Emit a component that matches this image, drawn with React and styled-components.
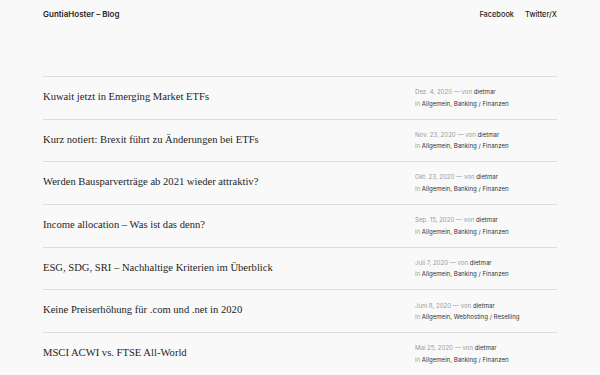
import React from "react";
import styled, { createGlobalStyle } from "styled-components";

const GlobalStyle = createGlobalStyle`
    html, body {
        margin: 0;
        padding: 0;
        background: #f9f9f9;
    }
`

const Page = styled.div`
    width: 600px;
    height: 375px;
    overflow: hidden;
    background: #f9f9f9;
    color: #1e1e1e;
`

const Header = styled.header`
    display: flex;
    justify-content: space-between;
    align-items: center;
    padding: 9px 43px 0 43px;
    height: 10px;
    font: 500 7.4px 'Inter', 'Liberation Sans', sans-serif;
`

const SiteTitle = styled.div`
    font-size: 8px;
    font-weight: 600;
`

const Nav = styled.nav`
    display: flex;
    gap: 11px;
`

const NavLink = styled.a`
    color: #1e1e1e;
    text-decoration: none;
`

const List = styled.ul`
    list-style: none;
    margin: 57px 43px 0 43px;
    padding: 0;
    border-top: 1px solid #dedede;
`

const Row = styled.li`
    display: grid;
    grid-template-columns: 1fr 142px;
    align-items: center;
    height: 41.7px;
    border-bottom: 1px solid #dedede;
`

const Title = styled.a`
    font: 400 10.6px 'Liberation Serif', 'DejaVu Serif', serif;
    color: #1e1e1e;
    text-decoration: none;
    padding-bottom: 3px;
`

const Meta = styled.div`
    display: flex;
    flex-direction: column;
    gap: 4.5px;
    font: 400 6.1px 'Inter', 'Liberation Sans', sans-serif;
    color: #9a9a9a;
    padding-bottom: 1px;
`

const Strong = styled.span`
    color: #333;
`

const posts = [
    { title: "Kuwait jetzt in Emerging Market ETFs", date: "Dez. 4, 2020", cats: "Allgemein, Banking / Finanzen" },
    { title: "Kurz notiert: Brexit führt zu Änderungen bei ETFs", date: "Nov. 23, 2020", cats: "Allgemein, Banking / Finanzen" },
    { title: "Werden Bausparverträge ab 2021 wieder attraktiv?", date: "Okt. 23, 2020", cats: "Allgemein, Banking / Finanzen" },
    { title: "Income allocation – Was ist das denn?", date: "Sep. 15, 2020", cats: "Allgemein, Banking / Finanzen" },
    { title: "ESG, SDG, SRI – Nachhaltige Kriterien im Überblick", date: "Juli 7, 2020", cats: "Allgemein, Banking / Finanzen" },
    { title: "Keine Preiserhöhung für .com und .net in 2020", date: "Juni 8, 2020", cats: "Allgemein, Webhosting / Reselling" },
    { title: "MSCI ACWI vs. FTSE All-World", date: "Mai 25, 2020", cats: "Allgemein, Banking / Finanzen" },
];

const App = () => {
    return (
        <Page>
            <GlobalStyle/>
            <Header>
                <SiteTitle>GuntiaHoster – Blog</SiteTitle>
                <Nav>
                    <NavLink href="#">Facebook</NavLink>
                    <NavLink href="#">Twitter/X</NavLink>
                </Nav>
            </Header>
            <List>
                {posts.map(post => (
                    <Row key={post.title}>
                        <Title href="#">{post.title}</Title>
                        <Meta>
                            <div>{post.date} — von <Strong>dietmar</Strong></div>
                            <div>in <Strong>{post.cats}</Strong></div>
                        </Meta>
                    </Row>
                ))}
            </List>
        </Page>
    );
};

export default App;
